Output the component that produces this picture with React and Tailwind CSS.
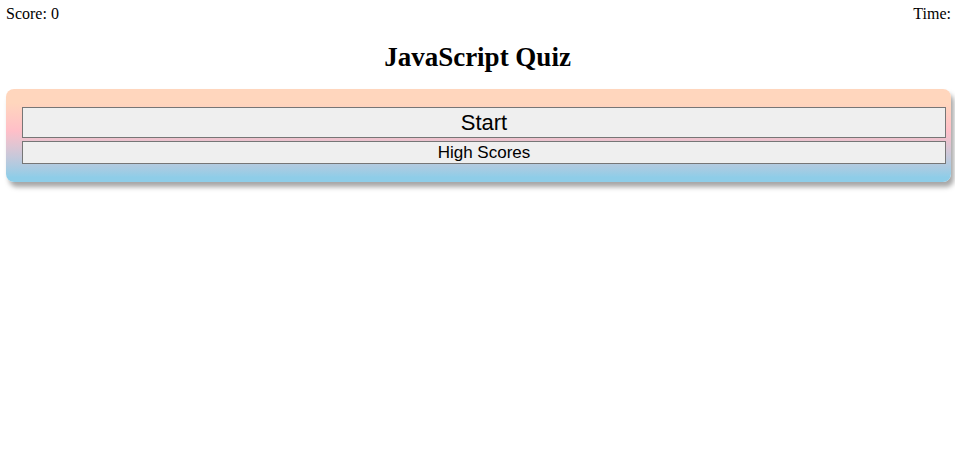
export default function App() {
  return (
    <div className="min-h-screen bg-white text-black font-['Liberation_Serif',serif]">
      <div className="flex justify-between pl-[6px] pr-[4px] pt-[5px] text-[16px] leading-[18px]">
        <span>Score: 0</span>
        <span>Time:</span>
      </div>

      <h1 className="mt-[19px] text-center text-[27px] font-bold leading-[30px]">
        JavaScript Quiz
      </h1>

      <div className="ml-[6px] mr-[4px] mt-[17px] rounded-lg bg-gradient-to-b from-[#ffd6bd] from-15% via-[#ffbfc8] via-45% to-[#8ecde8] to-95% pl-4 pr-[5px] py-[18px] shadow-[3px_5px_5px_rgba(0,0,0,0.35)] font-['Liberation_Sans',sans-serif]">
        <button className="block w-full h-[31px] border border-[#767676] bg-[#efefef] text-[22px] leading-none text-black">
          Start
        </button>
        <button className="mt-[3px] block w-full h-[23px] border border-[#767676] bg-[#efefef] text-[17px] leading-none text-black">
          High Scores
        </button>
      </div>
    </div>
  );
}
